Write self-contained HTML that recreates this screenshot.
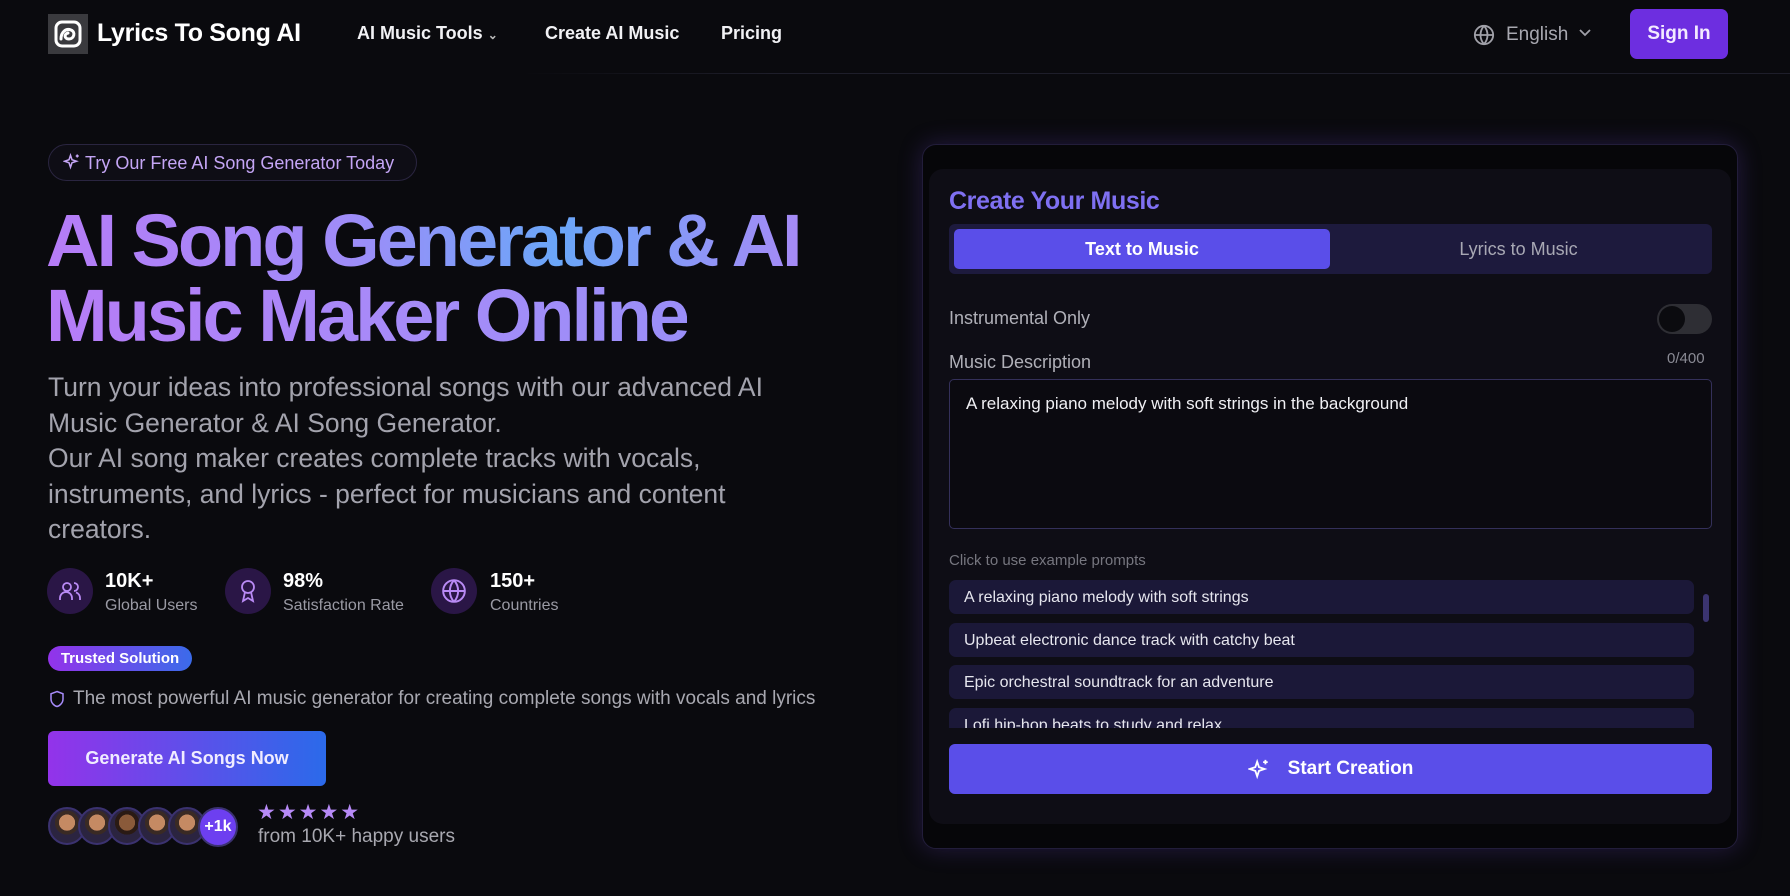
<!DOCTYPE html>
<html><head><meta charset="utf-8">
<style>
*{box-sizing:border-box;margin:0;padding:0}
body{width:1790px;height:896px;overflow:hidden;background:#0a0a0e;font-family:"Liberation Sans",sans-serif;color:#fff;position:relative}
.a{position:absolute}
.nav{font-size:18px;font-weight:bold;color:#f1f1f4;top:23px}
.grad{background-image:linear-gradient(90deg,#b67cf7 0%,#9f8cf8 40%,#6aa6f8 68%,#a68af6 100%);-webkit-background-clip:text;background-clip:text;color:transparent;-webkit-text-fill-color:transparent}
.h1{left:46px;font-size:74px;font-weight:bold;letter-spacing:-3px;line-height:80px;white-space:nowrap}
.p{left:48px;font-size:26.5px;color:#a3a3ad;line-height:35.5px;white-space:nowrap}
.ic{width:46px;height:46px;border-radius:50%;background:#2a1646;display:flex;align-items:center;justify-content:center}
.sv{font-size:20px;font-weight:bold}
.sl{font-size:16px;color:#9a9aa4}
.pr{left:949px;width:745px;height:34px;background:#1b1838;border-radius:7px;font-size:16px;color:#e6e6ee;padding:9px 15px}
.av{width:38px;height:38px;border-radius:50%;border:2px solid #3b3270;background:radial-gradient(circle at 50% 40%,#c58a63 0 30%,#3a2a24 31% 45%,#2b2440 46%)}
</style></head><body>
<div class="a" style="left:520px;top:73px;width:1270px;height:1px;background:linear-gradient(90deg,transparent,#1e1e2a 20%,#1e1e2a)"></div>
<div class="a" style="left:48px;top:14px;width:40px;height:40px;background:#3a3a3e;display:flex;align-items:center;justify-content:center">
<svg width="30" height="30" viewBox="0 0 30 30" fill="none" stroke="#fff" stroke-width="3" stroke-linecap="round"><rect x="3" y="3" width="24" height="24" rx="6"/><path d="M8 20c0-7 5-11 10-9s3 9-2 9-5-5-1-6"/></svg></div>
<div class="a" style="left:97px;top:19px;font-size:25px;font-weight:bold;letter-spacing:-0.3px">Lyrics To Song AI</div>
<div class="a nav" style="left:357px">AI Music Tools <span style="font-size:12px;color:#bbb">&#8964;</span></div>
<div class="a nav" style="left:545px">Create AI Music</div>
<div class="a nav" style="left:721px">Pricing</div>
<svg class="a" style="left:1473px;top:24px" width="22" height="22" viewBox="0 0 24 24" fill="none" stroke="#a0a0a8" stroke-width="2"><circle cx="12" cy="12" r="10"/><path d="M2 12h20M12 2a15 15 0 0 1 0 20M12 2a15 15 0 0 0 0 20"/></svg>
<div class="a" style="left:1506px;top:24px;font-size:19px;color:#a8a8b0">English</div>
<svg class="a" style="left:1578px;top:28px" width="14" height="10" viewBox="0 0 14 10" fill="none" stroke="#a0a0a8" stroke-width="1.8"><path d="M2 2l5 5 5-5"/></svg>
<div class="a" style="left:1630px;top:9px;width:98px;height:50px;background:#6d2ee0;border-radius:7px;font-size:19px;font-weight:bold;color:#f3eaff;display:flex;align-items:center;justify-content:center">Sign In</div>

<div class="a" style="left:48px;top:144px;width:369px;height:37px;border:1px solid #2a2540;border-radius:19px;background:#0e0d15;font-size:18px;color:#c4a5f5;padding:8px 0 0 36px">Try Our Free AI Song Generator Today</div>
<svg class="a" style="left:63px;top:153px" width="18" height="18" viewBox="0 0 24 24" fill="none" stroke="#c4a5f5" stroke-width="2"><path d="M10 3l2 6 6 2-6 2-2 6-2-6-6-2 6-2z M19 2v4M17 4h4"/></svg>

<div class="a h1 grad" style="top:201px">AI Song Generator &amp; AI</div>
<div class="a h1 grad" style="top:276px;background-image:linear-gradient(90deg,#b67cf7,#a58cf8 60%,#9a8ef8)">Music Maker Online</div>

<div class="a p" style="top:370px">Turn your ideas into professional songs with our advanced AI<br>Music Generator &amp; AI Song Generator.<br>Our AI song maker creates complete tracks with vocals,<br>instruments, and lyrics - perfect for musicians and content<br>creators.</div>

<div class="a ic" style="left:47px;top:568px"><svg width="24" height="24" viewBox="0 0 24 24" fill="none" stroke="#b98af5" stroke-width="1.8"><circle cx="9" cy="8" r="4"/><path d="M2 21v-2a6 6 0 0 1 12 0v2M16 4a4 4 0 0 1 0 8M22 21v-2a6 6 0 0 0-4-5.6"/></svg></div>
<div class="a sv" style="left:105px;top:570px">10K+</div><div class="a sl" style="left:105px;top:597px">Global Users</div>
<div class="a ic" style="left:225px;top:568px"><svg width="24" height="24" viewBox="0 0 24 24" fill="none" stroke="#b98af5" stroke-width="1.8"><circle cx="12" cy="8" r="6"/><path d="M9 13l-2 9 5-3 5 3-2-9"/></svg></div>
<div class="a sv" style="left:283px;top:570px">98%</div><div class="a sl" style="left:283px;top:597px">Satisfaction Rate</div>
<div class="a ic" style="left:431px;top:568px"><svg width="26" height="26" viewBox="0 0 24 24" fill="none" stroke="#b98af5" stroke-width="1.8"><circle cx="12" cy="12" r="10"/><path d="M2 12h20M12 2a15 15 0 0 1 0 20M12 2a15 15 0 0 0 0 20"/></svg></div>
<div class="a sv" style="left:490px;top:570px">150+</div><div class="a sl" style="left:490px;top:597px">Countries</div>

<div class="a" style="left:48px;top:646px;width:144px;height:25px;border-radius:13px;background:linear-gradient(90deg,#9333ea,#3b6bea);font-size:15px;font-weight:bold;padding-top:4px;text-align:center">Trusted Solution</div>
<svg class="a" style="left:48px;top:689px" width="18" height="20" viewBox="0 0 24 24" fill="none" stroke="#a78bfa" stroke-width="2"><path d="M12 2l8 3v7c0 5-4 9-8 10-4-1-8-5-8-10V5z"/></svg>
<div class="a" style="left:73px;top:688px;font-size:19px;color:#a8a8b0">The most powerful AI music generator for creating complete songs with vocals and lyrics</div>

<div class="a" style="left:48px;top:731px;width:278px;height:55px;border-radius:6px;background:linear-gradient(90deg,#9333ea,#2b6aea);font-size:18px;font-weight:bold;display:flex;align-items:center;justify-content:center;color:#f0ecff">Generate AI Songs Now</div>

<div class="a av" style="left:48px;top:807px"></div>
<div class="a av" style="left:78px;top:807px"></div>
<div class="a av" style="left:108px;top:807px;background:radial-gradient(circle at 50% 40%,#8a5a3a 0 30%,#2a1a14 31% 45%,#2b2440 46%)"></div>
<div class="a av" style="left:138px;top:807px"></div>
<div class="a av" style="left:168px;top:807px"></div>
<div class="a" style="left:198px;top:807px;width:40px;height:40px;border-radius:50%;background:#6d3ff0;border:2px solid #3b3270;font-size:16px;font-weight:bold;display:flex;align-items:center;justify-content:center">+1k</div>
<div class="a" style="left:257px;top:800px;font-size:21px;color:#b78af7;letter-spacing:2px">★★★★★</div>
<div class="a" style="left:258px;top:826px;font-size:19px;color:#a8a8b0">from 10K+ happy users</div>

<div class="a" style="left:922px;top:144px;width:816px;height:705px;border-radius:14px;background:#060609;border:1px solid #221d3a;box-shadow:0 0 24px rgba(110,70,220,.25)"></div>
<div class="a" style="left:929px;top:169px;width:802px;height:655px;border-radius:14px;background:#0e0d15"></div>
<div class="a" style="left:949px;top:187px;font-size:25px;font-weight:bold;color:#7f70f2;letter-spacing:-0.4px">Create Your Music</div>
<div class="a" style="left:949px;top:224px;width:763px;height:50px;border-radius:6px;background:#1d1a3d"></div>
<div class="a" style="left:954px;top:229px;width:376px;height:40px;border-radius:5px;background:#5a4ee9;font-size:18px;font-weight:bold;display:flex;align-items:center;justify-content:center">Text to Music</div>
<div class="a" style="left:1330px;top:229px;width:377px;height:40px;font-size:18px;color:#a8a8b4;display:flex;align-items:center;justify-content:center">Lyrics to Music</div>
<div class="a" style="left:949px;top:308px;font-size:18px;color:#b0b0b8">Instrumental Only</div>
<div class="a" style="left:1657px;top:304px;width:55px;height:30px;border-radius:15px;background:#2e2e34"><div style="margin:2px;width:26px;height:26px;border-radius:50%;background:#0b0b0f"></div></div>
<div class="a" style="left:949px;top:352px;font-size:18px;color:#b0b0b8">Music Description</div>
<div class="a" style="left:1667px;top:350px;font-size:15px;color:#8a8a94">0/400</div>
<div class="a" style="left:949px;top:379px;width:763px;height:150px;border:1px solid #34305a;border-radius:5px;background:#0b0a10;padding:14px 16px;font-size:17px;color:#f0f0f4">A relaxing piano melody with soft strings in the background</div>
<div class="a" style="left:949px;top:552px;font-size:15px;color:#76767f">Click to use example prompts</div>
<div class="a" style="left:949px;top:578px;width:770px;height:150px;overflow:hidden">
<div class="a pr" style="left:0;top:2px">A relaxing piano melody with soft strings</div>
<div class="a pr" style="left:0;top:45px">Upbeat electronic dance track with catchy beat</div>
<div class="a pr" style="left:0;top:87px">Epic orchestral soundtrack for an adventure</div>
<div class="a pr" style="left:0;top:130px">Lofi hip-hop beats to study and relax</div>
</div>
<div class="a" style="left:1703px;top:594px;width:6px;height:28px;border-radius:3px;background:#3b3470"></div>
<div class="a" style="left:949px;top:744px;width:763px;height:50px;border-radius:6px;background:#5a4ee9;font-size:19px;font-weight:bold;display:flex;align-items:center;justify-content:center;gap:18px">
<svg width="22" height="22" viewBox="0 0 24 24" fill="none" stroke="#fff" stroke-width="2"><path d="M10 4l2 6 6 2-6 2-2 6-2-6-6-2 6-2z M19 2v5M16.5 4.5h5"/></svg>Start Creation</div>
</body></html>
